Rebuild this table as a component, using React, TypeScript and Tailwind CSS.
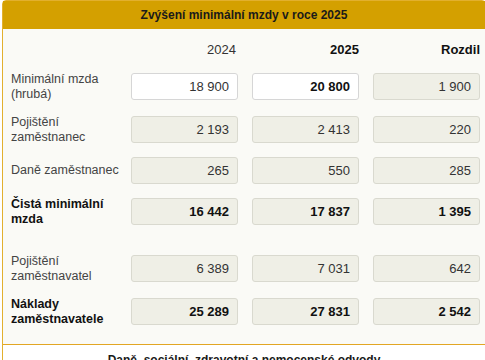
const rows = [
  { label: "Minimální mzda (hrubá)", vals: ["18 900", "20 800", "1 900"], bold: false, editable: true, mt: "mt-[10px]" },
  { label: "Pojištění zaměstnanec", vals: ["2 193", "2 413", "220"], bold: false, editable: false, mt: "mt-[16px]" },
  { label: "Daně zaměstnanec", vals: ["265", "550", "285"], bold: false, editable: false, mt: "mt-[14px]" },
  { label: "Čistá minimální mzda", vals: ["16 442", "17 837", "1 395"], bold: true, editable: false, mt: "mt-[14px]" },
  { label: "Pojištění zaměstnavatel", vals: ["6 389", "7 031", "642"], bold: false, editable: false, mt: "mt-[30px]" },
  { label: "Náklady zaměstnavatele", vals: ["25 289", "27 831", "2 542"], bold: true, editable: false, mt: "mt-[16px]" },
];

const Field = ({ value, white, bold }: { value: string; white: boolean; bold: boolean }) => (
  <div
    className={
      "h-[27px] rounded-[3px] border flex items-center justify-end pr-[8px] text-[13px] " +
      (white ? "bg-white border-[#d6d6d6] " : "bg-[#efefe6] border-[#d9d9cf] ") +
      (bold ? "font-bold text-[#111]" : "text-[#333]")
    }
  >
    {value}
  </div>
);

export default function App() {
  return (
    <div className="w-[485px] h-[360px] overflow-hidden bg-white text-[12px] leading-[15px] font-['Liberation_Sans',Arial,sans-serif]">
      <div className="ml-[2px] w-[484px] border border-[#e2b02e] rounded-t-[4px] bg-[#fafaf6]">
        <div className="h-[28px] bg-[#d4a000] flex items-center justify-center font-bold text-[#1a1a1a]">
          Zvýšení minimální mzdy v roce 2025
        </div>
        <div className="pl-[8px] pt-[7px] pb-[19px] border-b border-[#e2a624]">
          <div className="flex h-[27px] items-center text-[13px] text-[#333]">
            <div className="w-[120px]" />
            <div className="grid grid-cols-[107px_107px_107px] gap-x-[14px]">
              <div className="text-right pr-[2px]">2024</div>
              <div className="text-right font-bold text-[#111]">2025</div>
              <div className="text-right font-bold text-[#111]">Rozdil</div>
            </div>
          </div>
          {rows.map((r) => (
            <div key={r.label} className={"flex h-[27px] items-center " + r.mt}>
              <div className={"w-[120px] pr-[8px] text-[12.5px] " + (r.bold ? "font-bold text-[#111]" : "text-[#444]")}>
                {r.label}
              </div>
              <div className="grid grid-cols-[107px_107px_107px] gap-x-[14px]">
                {r.vals.map((v, i) => (
                  <Field key={i} value={v} white={r.editable && i < 2} bold={r.bold || (r.editable && i === 1)} />
                ))}
              </div>
            </div>
          ))}
        </div>
        <div className="h-[28px] bg-white flex items-center justify-center font-bold text-[#1a1a1a] pt-[2px]">
          Daně, sociální, zdravotní a nemocenské odvody
        </div>
      </div>
    </div>
  );
}
